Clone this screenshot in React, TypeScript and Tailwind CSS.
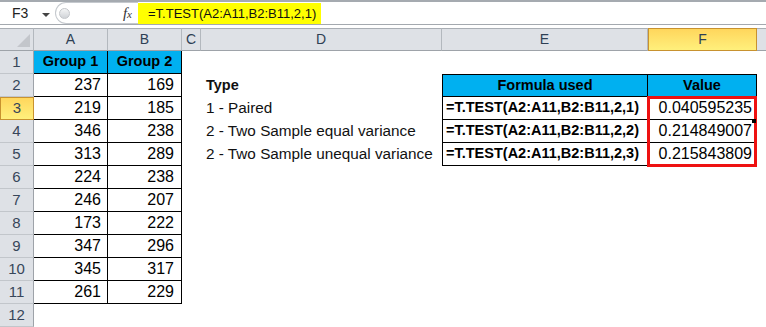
import React from "react";

type Row = {
  a?: string;
  b?: string;
  d?: string;
  dBold?: boolean;
  e?: string;
  f?: string;
};

const rows: Row[] = [
  { a: "Group 1", b: "Group 2" },
  { a: "237", b: "169", d: "Type", dBold: true, e: "Formula used", f: "Value" },
  { a: "219", b: "185", d: "1 - Paired", e: "=T.TEST(A2:A11,B2:B11,2,1)", f: "0.040595235" },
  { a: "346", b: "238", d: "2 - Two Sample equal variance", e: "=T.TEST(A2:A11,B2:B11,2,2)", f: "0.214849007" },
  { a: "313", b: "289", d: "2 - Two Sample unequal variance", e: "=T.TEST(A2:A11,B2:B11,2,3)", f: "0.215843809" },
  { a: "224", b: "238" },
  { a: "246", b: "207" },
  { a: "173", b: "222" },
  { a: "347", b: "296" },
  { a: "345", b: "317" },
  { a: "261", b: "229" },
  {},
];

const colLetters = ["A", "B", "C", "D", "E", "F"];

export default function App() {
  return (
    <div className="relative w-[766px] h-[327px] overflow-hidden bg-white font-['Liberation_Sans',Arial,sans-serif] text-black">
      {/* Formula bar */}
      <div className="h-[25px] flex border-t-2 border-t-[#a5aab0] border-b border-b-[#a4a9af]">
        <div className="relative w-[55px] flex items-center">
          <span className="ml-[12px] text-[14px] text-[#222]">F3</span>
          <div className="absolute left-[42px] top-[11px] w-0 h-0 border-l-[4px] border-r-[4px] border-t-[4px] border-l-transparent border-r-transparent border-t-[#444]" />
        </div>
        <div className="relative w-[83px] rounded-l-[11px] border-l border-t border-b border-[#c5c9ce] bg-white flex items-center">
          <div className="ml-[3px] w-[11px] h-[11px] rounded-full border border-[#c3c6ca] bg-linear-to-b from-[#f4f5f6] to-[#d0d3d7]" />
          <span className="ml-auto mr-[6px] font-['Liberation_Serif',serif] italic text-[15px] text-[#333]">
            f<span className="text-[11px]">x</span>
          </span>
        </div>
        <div className="w-[183px] mt-[1px] bg-[#ffff00] flex items-center pl-[10px] text-[13px] text-[#111]">
          =T.TEST(A2:A11,B2:B11,2,1)
        </div>
      </div>
      <div className="h-[3px]" />

      {/* Sheet grid */}
      <div className="grid grid-cols-[34px_74px_74px_19px_241px_206px_109px_1fr]">
        {/* Column header row */}
        <div className="relative h-[23px] bg-[#dee1e6] border-t border-b border-r border-t-[#a9aeb4] border-b-[#9ea3a9] border-r-[#b3b8be]">
          <svg className="absolute right-[3px] bottom-[3px]" width="13" height="13" viewBox="0 0 13 13">
            <polygon points="13,0 13,13 0,13" fill="#c3c6cb" />
          </svg>
        </div>
        {colLetters.map((c) =>
          c === "F" ? (
            <div
              key={c}
              className="h-[23px] bg-linear-to-b from-[#ffd65c] to-[#fff07c] border border-[#c8922f] flex items-center justify-center text-[14px] text-[#2e3f54]"
            >
              {c}
            </div>
          ) : (
            <div
              key={c}
              className="h-[23px] bg-[#dee1e6] border-t border-b border-r border-t-[#a9aeb4] border-b-[#9ea3a9] border-r-[#b3b8be] flex items-center justify-center text-[14px] text-[#2e3f54]"
            >
              {c}
            </div>
          )
        )}
        <div className="h-[23px] bg-[#dee1e6] border-t border-b border-t-[#a9aeb4] border-b-[#9ea3a9]" />

        {/* Data rows */}
        {rows.map((r, i) => {
          const n = i + 1;
          const inAB = n <= 11;
          const inEF = n >= 2 && n <= 5;
          const header = n === 1;
          const efHeader = n === 2;
          const abBorder = inAB ? "border-r border-b border-black" : "";
          const efBase = inEF
            ? `border-r border-b border-black ${efHeader ? "border-t" : ""}`
            : "";
          return (
            <React.Fragment key={n}>
              {n === 3 ? (
                <div className="h-[23px] bg-linear-to-b from-[#ffd65c] to-[#fff07c] border border-[#c8922f] flex items-center justify-center text-[15px] text-[#37465a]">
                  {n}
                </div>
              ) : (
                <div className="h-[23px] bg-[#dee1e6] border-r border-b border-r-[#9ea3a9] border-b-[#c2c6cb] flex items-center justify-center text-[15px] text-[#37465a]">
                  {n}
                </div>
              )}
              {/* A */}
              <div
                className={`h-[23px] flex items-center ${abBorder} ${
                  header
                    ? "bg-[#00b0f0] justify-center font-bold text-[14.5px]"
                    : "justify-end pr-[6px] text-[16px]"
                }`}
              >
                {r.a}
              </div>
              {/* B */}
              <div
                className={`h-[23px] flex items-center ${abBorder} ${
                  header
                    ? "bg-[#00b0f0] justify-center font-bold text-[14.5px]"
                    : "justify-end pr-[7px] text-[16px]"
                }`}
              >
                {r.b}
              </div>
              {/* C */}
              <div className="h-[23px]" />
              {/* D */}
              <div
                className={`h-[23px] flex items-center pl-[5px] whitespace-nowrap ${
                  r.dBold ? "font-bold text-[14.5px]" : "text-[15.3px]"
                } text-[#111]`}
              >
                {r.d}
              </div>
              {/* E */}
              <div
                className={`h-[23px] flex items-center whitespace-nowrap ${
                  inEF ? `border-l ${efBase}` : ""
                } ${
                  efHeader
                    ? "bg-[#00b0f0] justify-center font-bold text-[14.5px]"
                    : "pl-[3px] font-bold text-[14.5px]"
                }`}
              >
                {r.e}
              </div>
              {/* F */}
              <div
                className={`h-[23px] flex items-center whitespace-nowrap ${efBase} ${
                  efHeader
                    ? "bg-[#00b0f0] justify-center font-bold text-[14.5px]"
                    : "justify-end pr-[4px] text-[16px]"
                }`}
              >
                {r.f}
              </div>
              <div className="h-[23px]" />
            </React.Fragment>
          );
        })}
      </div>

      {/* Red highlight box over F3:F5 */}
      <div className="absolute left-[647px] top-[96px] w-[110px] h-[71px] border-[3px] border-[#ee1111]" />
      {/* Fill handle */}
      <div className="absolute left-[752px] top-[119px] w-[4px] h-[4px] bg-black" />
    </div>
  );
}
